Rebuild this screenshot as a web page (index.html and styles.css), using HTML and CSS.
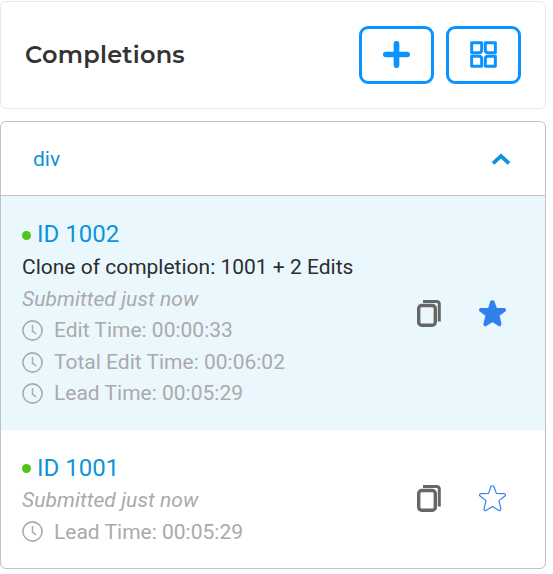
FILE: index.html
```html
<!DOCTYPE html>
<html lang="en">
<head>
<meta charset="utf-8">
<title>Completions</title>
<link rel="stylesheet" href="styles.css">
</head>
<body>
<svg class="symbols" aria-hidden="true">
  <symbol id="clock" viewBox="0 0 21 21"><circle cx="10.5" cy="10.5" r="9.6" fill="none" stroke="currentColor" stroke-width="1.6"/><path d="M10.5 5v6.2l3.7 2.7" fill="none" stroke="currentColor" stroke-width="1.5"/></symbol>
  <symbol id="copy" viewBox="0 0 24 27"><rect x="1.7" y="5.5" width="16.6" height="19.8" rx="3" fill="none" stroke="currentColor" stroke-width="3.4"/><path d="M6 1.5h13.5q2.8 0 2.8 2.8V21.5" fill="none" stroke="currentColor" stroke-width="3"/></symbol>
  <symbol id="star" viewBox="0 0 28 28"><path d="M12.3 1.3Q14 .3 15.3 1.3L18 8.7 26.4 9Q28 9.5 27.2 11.2L20.7 16.2 22.7 24.6Q22.6 26.8 20.7 26.5L14 22.2 7.2 26.5Q5.1 26.8 5.2 24.6L7.3 16.2.8 11.2Q0 9.5 1.6 9L10 8.7Z" stroke="currentColor" stroke-width="1.2" stroke-linejoin="round"/></symbol>
</svg>
<main class="panel">
  <header class="toolbar">
    <h1 class="title">Completions</h1>
    <div class="buttons">
      <button class="button" aria-label="Add"><svg width="27" height="27" viewBox="0 0 27 27"><path d="M13.5 2.8v21.4M2.8 13.5h21.4" stroke="currentColor" stroke-width="5.7" stroke-linecap="round"/></svg></button>
      <button class="button" aria-label="Grid"><svg width="27" height="27" viewBox="0 0 28 28" fill="none" stroke="currentColor" stroke-width="3.1"><path d="M1.7 1.7h10.4v7.6q0 2.8-2.8 2.8H1.7ZM15.9 1.7h10.4v10.4h-7.6q-2.8 0-2.8-2.8ZM1.7 15.9h7.6q2.8 0 2.8 2.8v7.6H1.7ZM18.7 15.9h7.6v10.4H15.9v-7.6q0-2.8 2.8-2.8Z" stroke-linejoin="round"/></svg></button>
    </div>
  </header>
  <section class="list">
    <div class="list-header">
      <span class="list-name">div</span>
      <svg class="chevron" width="20" height="13" viewBox="0 0 20 13"><path d="M2 10.3 10 3l8 7.3" fill="none" stroke="currentColor" stroke-width="3.8"/></svg>
    </div>
    <article class="item selected">
      <div class="details">
        <div class="item-id"><i class="dot"></i>ID 1002</div>
        <div class="description">Clone of completion: 1001 + 2 Edits</div>
        <div class="submitted">Submitted just now</div>
        <div class="time"><svg class="clock"><use href="#clock"/></svg>Edit Time: 00:00:33</div>
        <div class="time"><svg class="clock"><use href="#clock"/></svg>Total Edit Time: 00:06:02</div>
        <div class="time"><svg class="clock"><use href="#clock"/></svg>Lead Time: 00:05:29</div>
      </div>
      <div class="actions"><svg class="copy"><use href="#copy"/></svg><svg class="star filled"><use href="#star"/></svg></div>
    </article>
    <article class="item">
      <div class="details">
        <div class="item-id"><i class="dot"></i>ID 1001</div>
        <div class="submitted">Submitted just now</div>
        <div class="time"><svg class="clock"><use href="#clock"/></svg>Lead Time: 00:05:29</div>
      </div>
      <div class="actions"><svg class="copy"><use href="#copy"/></svg><svg class="star"><use href="#star"/></svg></div>
    </article>
  </section>
</main>
</body>
</html>
```
FILE: styles.css
```css
* { box-sizing: border-box; }
body { margin: 0; background: #fff; color: #333; font: 21px/31.5px Roboto, sans-serif; }
svg { display: block; flex: none; }
.symbols { display: none; }
.panel { width: 546px; padding-top: 1px; }
.toolbar { display: flex; align-items: center; justify-content: space-between; height: 108px; padding: 0 24px; border: 1px solid #e8e8e8; border-radius: 6px; }
.title { margin: 0; font: 600 24px/32px Montserrat, Inter, sans-serif; letter-spacing: 0.25px; }
.buttons { display: flex; gap: 12px; }
.button { display: flex; align-items: center; justify-content: center; width: 75px; height: 58px; padding: 0 1px 1px 0; border: 3px solid #0b94ff; border-radius: 9px; background: #fff; color: #0b94ff; }
.list { height: 448px; margin-top: 12px; border: 1px solid #c2c2c2; border-radius: 6px; overflow: hidden; }
.list-header { display: flex; align-items: center; justify-content: space-between; height: 74px; padding: 1px 34px 0 32px; border-bottom: 1px solid #c2c2c2; color: #0c94da; }
.list-name { padding-top: 1px; }
.item { display: flex; align-items: center; justify-content: space-between; height: 138px; padding: 0 39px 1px 21px; }
.item.selected { height: 234px; padding-bottom: 0; background: #eaf8fe; }
.item-id { display: flex; align-items: center; height: 36px; padding-top: 1px; font-size: 24px; line-height: 36px; color: #0c94da; }
.selected .item-id { padding-top: 0; }
.dot { width: 9px; height: 9px; margin: 1px 6px 0 0; border-radius: 50%; background: #52c41a; }
.selected .dot { margin-top: 2px; }
.description { color: #2d2d2d; }
.submitted { font-style: italic; letter-spacing: 0.08px; color: #aaa; }
.time { display: flex; align-items: center; gap: 11px; color: #aaa; }
.clock { width: 21px; height: 21px; margin-bottom: 1px; }
.actions { display: flex; align-items: center; gap: 38px; }
.copy { width: 24px; height: 27px; color: #666; }
.star { width: 27px; height: 27px; fill: none; color: #2f80ed; }
.star.filled { fill: #2f80ed; }
```
